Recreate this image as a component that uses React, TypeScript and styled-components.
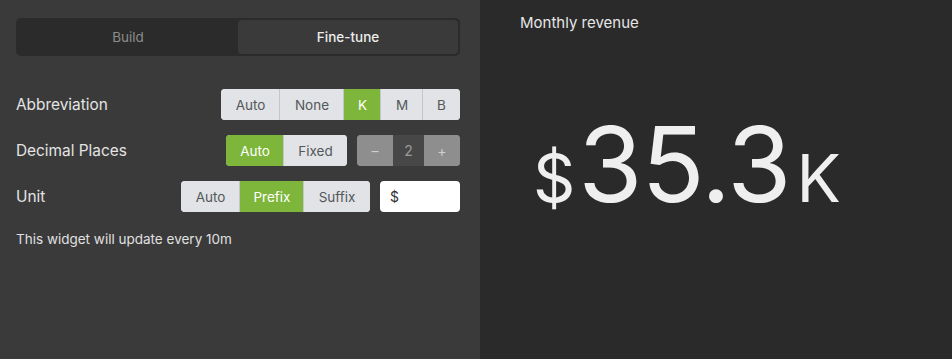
import styled, { createGlobalStyle } from "styled-components";

const GlobalStyle = createGlobalStyle`
  html, body {
    margin: 0;
    padding: 0;
    background: #2a2a2a;
  }
  body {
    font-family: Inter, "Noto Sans", sans-serif;
  }
`;

type Option = { label: string; width: number; active?: boolean };

const abbreviations: Option[] = [
  { label: "Auto", width: 59 },
  { label: "None", width: 64 },
  { label: "K", width: 37, active: true },
  { label: "M", width: 42 },
  { label: "B", width: 37 },
];

const decimals: Option[] = [
  { label: "Auto", width: 58, active: true },
  { label: "Fixed", width: 63 },
];

const units: Option[] = [
  { label: "Auto", width: 59 },
  { label: "Prefix", width: 64, active: true },
  { label: "Suffix", width: 66 },
];

const Segmented = ({ options }: { options: Option[] }) => (
  <SegmentGroup>
    {options.map((o) => (
      <Segment key={o.label} $active={o.active} $width={o.width}>
        {o.label}
      </Segment>
    ))}
  </SegmentGroup>
);

const App = () => {
  return (
    <>
      <GlobalStyle />
      <Layout>
        <Settings>
          <Tabs>
            <Tab>Build</Tab>
            <Tab $active>Fine-tune</Tab>
          </Tabs>
          <Rows>
            <Row>
              <Label>Abbreviation</Label>
              <Controls>
                <Segmented options={abbreviations} />
              </Controls>
            </Row>
            <Row>
              <Label>Decimal Places</Label>
              <Controls>
                <Segmented options={decimals} />
                <Stepper>
                  <StepButton>–</StepButton>
                  <StepValue>2</StepValue>
                  <StepButton>+</StepButton>
                </Stepper>
              </Controls>
            </Row>
            <Row>
              <Label>Unit</Label>
              <Controls>
                <Segmented options={units} />
                <UnitInput>$</UnitInput>
              </Controls>
            </Row>
          </Rows>
          <Note>This widget will update every 10m</Note>
        </Settings>
        <Preview>
          <PreviewTitle>Monthly revenue</PreviewTitle>
          <Metric>
            <Affix>$</Affix>
            <Value>35.3</Value>
            <Affix $gap>K</Affix>
          </Metric>
        </Preview>
      </Layout>
    </>
  );
};

const Layout = styled.div`
  display: flex;
  width: 952px;
  height: 359px;
`;

const Settings = styled.section`
  width: 480px;
  box-sizing: border-box;
  padding: 18px 20px 0 16px;
  background: #3a3a3a;
  display: flex;
  flex-direction: column;
`;

const Tabs = styled.div`
  display: flex;
  height: 38px;
  box-sizing: border-box;
  padding: 2px;
  border-radius: 5px;
  background: #2b2b2b;
`;

const Tab = styled.div<{ $active?: boolean }>`
  flex: 1;
  display: flex;
  align-items: center;
  justify-content: center;
  border-radius: 4px;
  font-size: 13.5px;
  font-weight: ${(p) => (p.$active ? 500 : 400)};
  color: ${(p) => (p.$active ? "#ececec" : "#8c8c8c")};
  background: ${(p) => (p.$active ? "#3a3a3a" : "transparent")};
`;

const Rows = styled.div`
  display: flex;
  flex-direction: column;
  gap: 15px;
  margin-top: 33px;
`;

const Row = styled.div`
  display: flex;
  align-items: center;
  justify-content: space-between;
  height: 31px;
`;

const Label = styled.span`
  font-size: 15.4px;
  color: #e4e4e4;
`;

const Controls = styled.div`
  display: flex;
  gap: 10px;
  height: 31px;
`;

const SegmentGroup = styled.div`
  display: flex;
  border-radius: 4px;
  overflow: hidden;
  background: #e1e3e6;
`;

const Segment = styled.div<{ $active?: boolean; $width: number }>`
  width: ${(p) => p.$width}px;
  display: flex;
  align-items: center;
  justify-content: center;
  font-size: 13.5px;
  color: ${(p) => (p.$active ? "#ffffff" : "#54575a")};
  background: ${(p) => (p.$active ? "#7db63a" : "#e1e3e6")};
  box-shadow: -1px 0 0 #c3c7cb;
  &:first-child {
    box-shadow: none;
  }
`;

const Stepper = styled.div`
  display: flex;
  border-radius: 4px;
  overflow: hidden;
  background: #8e8e8e;
`;

const StepButton = styled.div`
  width: 36px;
  display: flex;
  align-items: center;
  justify-content: center;
  font-size: 14px;
  color: #cfcfcf;
  background: #8e8e8e;
`;

const StepValue = styled.div`
  width: 31px;
  display: flex;
  align-items: center;
  justify-content: center;
  font-size: 14px;
  color: #9a9a9a;
  background: #474747;
`;

const UnitInput = styled.div`
  width: 80px;
  box-sizing: border-box;
  padding: 0 10px;
  display: flex;
  align-items: center;
  border-radius: 4px;
  background: #ffffff;
  font-size: 14px;
  color: #333;
`;

const Note = styled.p`
  margin: 19px 0 0;
  font-size: 13.5px;
  color: #e0e0e0;
`;

const Preview = styled.section`
  flex: 1;
  box-sizing: border-box;
  padding: 13px 40px 0;
  background: #2a2a2a;
  display: flex;
  flex-direction: column;
`;

const PreviewTitle = styled.h2`
  margin: 0;
  font-size: 15px;
  font-weight: 400;
  color: #e6e6e6;
`;

const Metric = styled.div`
  display: flex;
  align-items: baseline;
  margin-top: 80px;
  padding-left: 13px;
  color: #efefef;
  line-height: 1;
`;

const Affix = styled.span<{ $gap?: boolean }>`
  font-size: 66px;
  margin-left: ${(p) => (p.$gap ? "6px" : "0")};
  margin-right: ${(p) => (p.$gap ? "0" : "3px")};
`;

const Value = styled.span`
  font-size: 104px;
  letter-spacing: -1px;
`;

export default App;
